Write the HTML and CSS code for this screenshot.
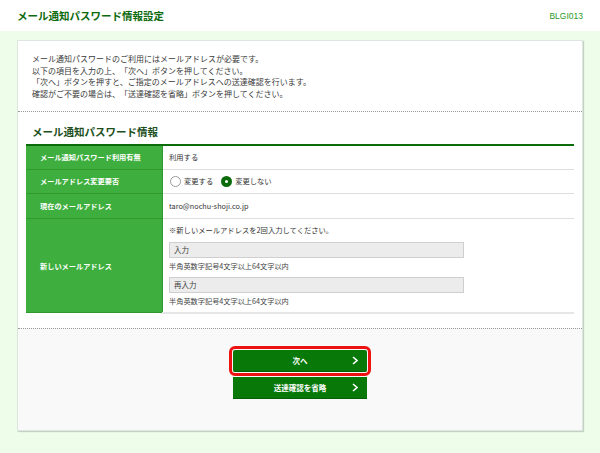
FILE: index.html
```html
<!DOCTYPE html>
<html lang="ja">
<head>
    <meta charset="UTF-8">
    <meta name="viewport" content="width=device-width, initial-scale=1.0">
    <title>メール通知パスワード情報設定</title>
    <link rel="stylesheet" href="styles.css">
</head>
<body>
    <header class="page-header">
        <h1>メール通知パスワード情報設定</h1>
        <span class="screen-id">BLGI013</span>
    </header>
    <main class="page-main">
        <div class="card">
            <div class="intro">
                <p>メール通知パスワードのご利用にはメールアドレスが必要です。</p>
                <p>以下の項目を入力の上、「次へ」ボタンを押してください。</p>
                <p>「次へ」ボタンを押すと、ご指定のメールアドレスへの送達確認を行います。</p>
                <p>確認がご不要の場合は、「送達確認を省略」ボタンを押してください。</p>
            </div>
            <div class="section">
                <h2>メール通知パスワード情報</h2>
                <table class="info-table">
                    <tr class="row-1">
                        <th>メール通知パスワード利用有無</th>
                        <td>利用する</td>
                    </tr>
                    <tr class="row-2">
                        <th>メールアドレス変更要否</th>
                        <td>
                            <div class="radios">
                                <label class="radio"><span class="radio-mark"></span>変更する</label>
                                <label class="radio"><span class="radio-mark checked"></span>変更しない</label>
                            </div>
                        </td>
                    </tr>
                    <tr class="row-3">
                        <th>現在のメールアドレス</th>
                        <td>taro@nochu-shoji.co.jp</td>
                    </tr>
                    <tr class="row-4">
                        <th>新しいメールアドレス</th>
                        <td>
                            <p class="note">※新しいメールアドレスを2回入力してください。</p>
                            <input type="text" class="field" placeholder="入力">
                            <p class="hint">半角英数字記号4文字以上64文字以内</p>
                            <input type="text" class="field second" placeholder="再入力">
                            <p class="hint">半角英数字記号4文字以上64文字以内</p>
                        </td>
                    </tr>
                </table>
            </div>
            <div class="actions">
                <button class="btn btn-focus">次へ<svg class="chev" width="6" height="9" viewBox="0 0 6 9"><polyline points="1,1 5,4.5 1,8" fill="none" stroke="#fff" stroke-width="1.6"/></svg></button>
                <button class="btn">送達確認を省略<svg class="chev" width="6" height="9" viewBox="0 0 6 9"><polyline points="1,1 5,4.5 1,8" fill="none" stroke="#fff" stroke-width="1.6"/></svg></button>
            </div>
        </div>
    </main>
</body>
</html>
```

FILE: styles.css
```css
body {
    font-family: "Noto Sans CJK JP", "Noto Sans", sans-serif;
    margin: 0;
    padding: 0;
    background-color: #edfdea;
    color: #333;
    text-spacing-trim: space-all;
}
p, h1, h2 {
    margin: 0;
}
.page-header {
    background-color: #fff;
    height: 31px;
    padding: 0 17px;
    display: flex;
    align-items: center;
    justify-content: space-between;
}
.page-header h1 {
    font-size: 10.5px;
    font-weight: bold;
    color: #0e6a0e;
}
.screen-id {
    font-size: 8.5px;
    color: #2a9a2a;
    font-family: "Liberation Sans", sans-serif;
}
.page-main {
    padding: 9px 17px 23px;
}
.card {
    background: #fff;
    border: 1px solid #dfe6df;
    box-shadow: 1px 1px 1px #c3d3c3;
}
.intro {
    padding: 12px 14px 11px;
    font-size: 8px;
    line-height: 11.7px;
    color: #3a3a3a;
}
.section {
    border-top: 1px dotted #999;
    padding: 13px 8px 14px;
}
.section h2 {
    font-size: 10.5px;
    font-weight: bold;
    line-height: 14px;
    color: #1c4f1c;
    padding-left: 6px;
    margin-bottom: 5px;
}
.info-table {
    width: 100%;
    border-collapse: collapse;
    border-top: 2px solid #0b6b0b;
}
.info-table th {
    width: 122px;
    background: #3eaf3e;
    color: #fff;
    font-size: 7.2px;
    font-weight: bold;
    text-align: left;
    padding: 0 0 0 14px;
    border-bottom: 1px solid #2f992f;
    border-right: 1px solid #2f992f;
}
.info-table td {
    font-size: 7.3px;
    padding: 0 0 0 6px;
    border-bottom: 1px solid #dedede;
    color: #333;
}
.row-1 th, .row-1 td {
    height: 23px;
}
.row-2 th, .row-2 td {
    height: 23px;
}
.row-3 th, .row-3 td {
    height: 24px;
}
.row-4 td {
    padding-top: 5px;
    padding-bottom: 5px;
    border-bottom: 2px solid #e6e6e6;
}
.radios {
    display: flex;
    align-items: center;
    gap: 8px;
    padding-left: 1px;
}
.radio {
    display: flex;
    align-items: center;
    gap: 3px;
}
.radio-mark {
    width: 11px;
    height: 11px;
    box-sizing: border-box;
    border-radius: 50%;
    border: 1px solid #9a9a9a;
    background: #fff;
}
.radio-mark.checked {
    border: 4px solid #0b6b0b;
}
.note {
    line-height: 12px;
    margin-bottom: 6px;
}
.field {
    display: block;
    box-sizing: border-box;
    width: 295px;
    height: 16px;
    margin: 0;
    padding: 0 0 0 4px;
    border: 1px solid #cfcfcf;
    background: #ececec;
    font-family: inherit;
    font-size: 7.5px;
}
.field::placeholder {
    color: #444;
}
.field.second {
    margin-top: 5px;
}
.hint {
    line-height: 12px;
    margin-top: 2px;
    font-size: 7.2px;
    color: #444;
}
.actions {
    border-top: 1px dotted #999;
    background: #f9f9f9;
    padding: 21px 0 31px;
    display: flex;
    flex-direction: column;
    align-items: center;
    gap: 5px;
}
.btn {
    position: relative;
    width: 134px;
    height: 22px;
    border: 0;
    background: #087808;
    border-bottom: 1px solid #056005;
    color: #fff;
    font-family: inherit;
    font-size: 7.5px;
    font-weight: bold;
    padding: 0;
    cursor: pointer;
}
.btn-focus {
    outline: 3px solid #ee1111;
    outline-offset: 1px;
    border-radius: 2px;
}
.chev {
    position: absolute;
    right: 9px;
    top: 6px;
}
```
